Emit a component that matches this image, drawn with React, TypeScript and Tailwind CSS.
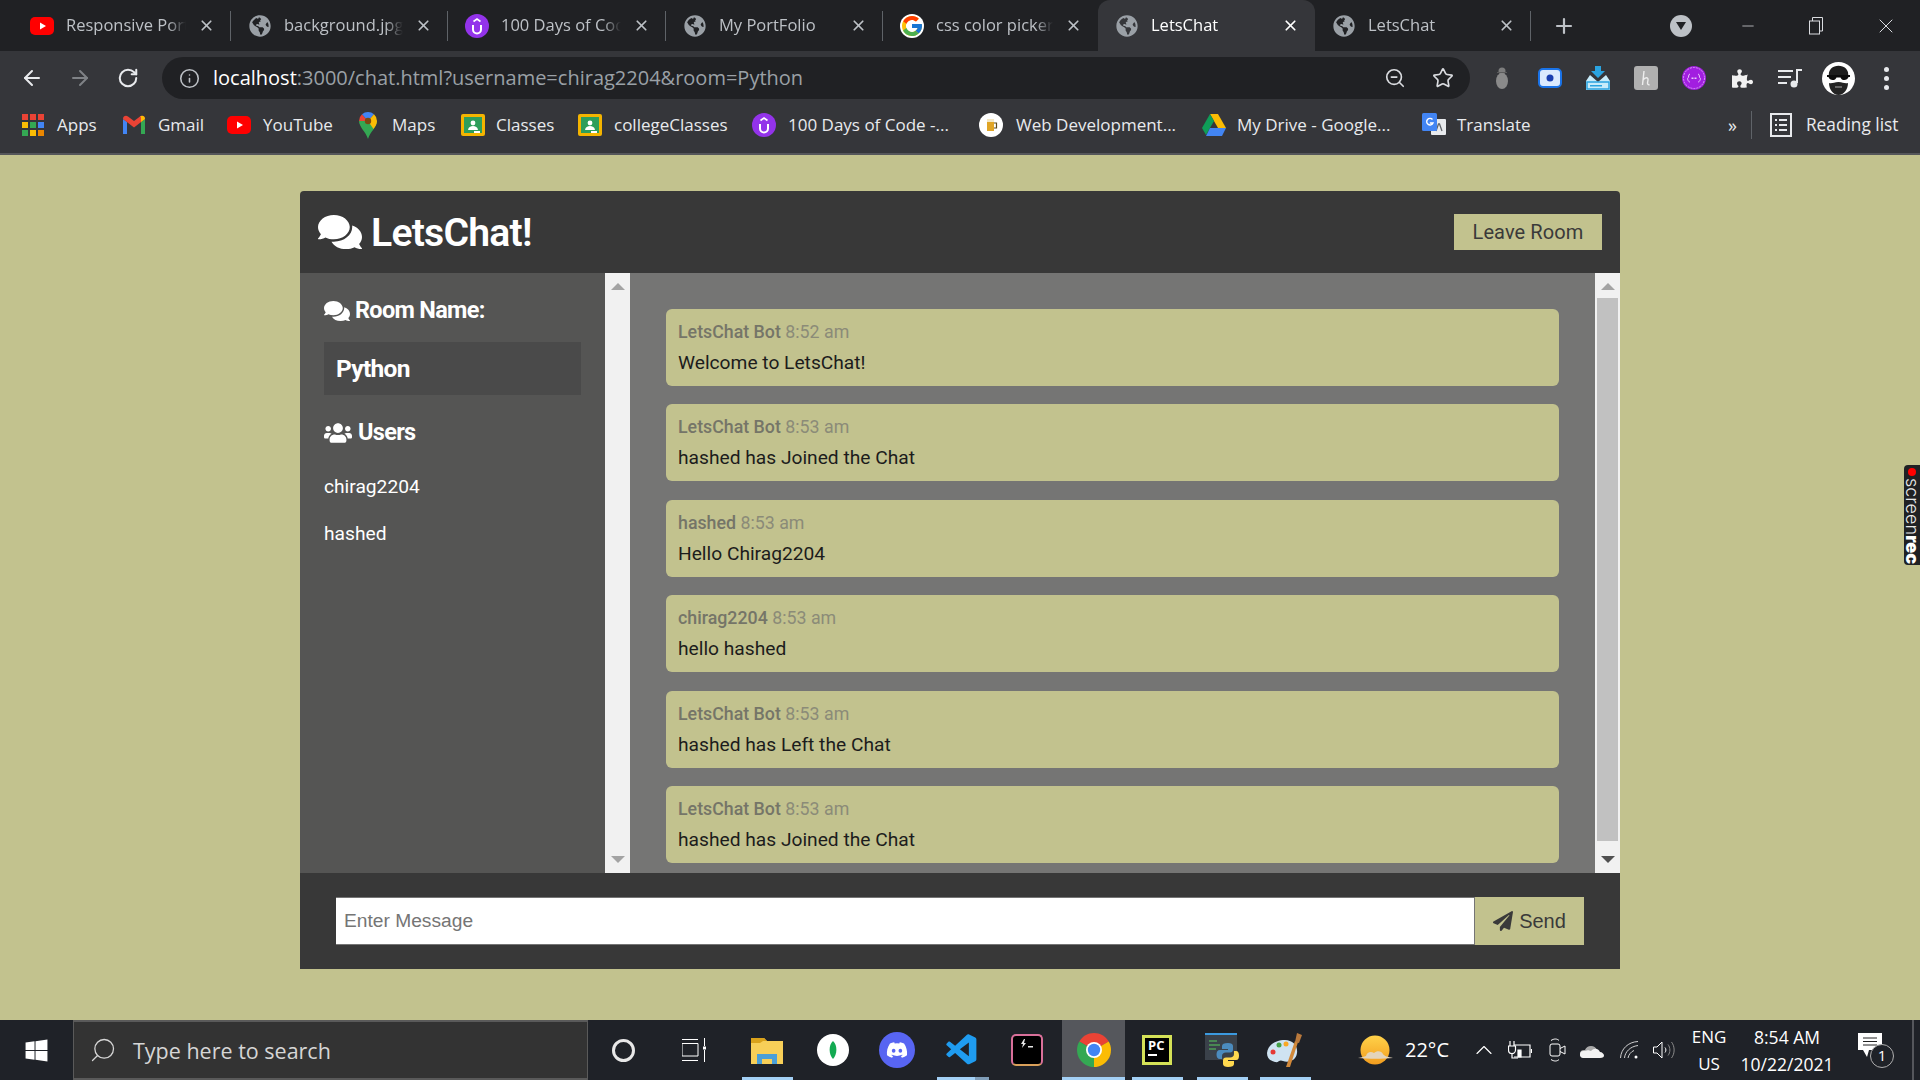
import { ArrowLeft, ArrowRight, ChevronUp, Info, Minus, Plus, RotateCw, Search, Star, X, ZoomOut } from "lucide-react";
import {
  FaComments,
  FaDiscord,
  FaGlobeAmericas,
  FaPaperPlane,
  FaPuzzlePiece,
  FaUsers,
  FaWindows,
} from "react-icons/fa";
import { FcGoogle } from "react-icons/fc";
import { VscVscode } from "react-icons/vsc";

const uiFont = "[font-family:'Open_Sans','Noto_Sans',sans-serif]";

function Globe() {
  return (
    <span className="flex w-[24px] shrink-0 justify-center">
      <FaGlobeAmericas size={22} className="text-[#9aa0a6]" />
    </span>
  );
}

function YouTubeIcon() {
  return (
    <svg width="24" height="24" viewBox="0 0 24 24" className="shrink-0">
      <rect x="0" y="3" width="24" height="18" rx="5" fill="#f00" />
      <path d="M10 8.500 16 12l-6 3.500z" fill="#fff" />
    </svg>
  );
}

function UdemyIcon() {
  return (
    <svg width="24" height="24" viewBox="0 0 24 24" className="shrink-0">
      <circle cx="12" cy="12" r="12" fill="#9333ea" />
      <path d="M8 11v4.500a4 4 0 0 0 8 0V11" fill="none" stroke="#fff" strokeWidth="2" />
      <path d="M8.500 7.500 12 5l3.500 2.500" fill="none" stroke="#fff" strokeWidth="1.600" />
    </svg>
  );
}

function ClassroomIcon() {
  return (
    <svg width="24" height="24" viewBox="0 0 24 24" className="shrink-0">
      <rect x="0" y="1" width="24" height="22" rx="2" fill="#f4b400" />
      <rect x="3" y="4" width="18" height="16" fill="#2e9e5b" />
      <circle cx="12" cy="10" r="2.400" fill="#fff" />
      <path d="M7 17c.5-3 2.500-4 5-4s4.500 1 5 4z" fill="#fff" />
      <rect x="13" y="18" width="6" height="2" fill="#fff" />
    </svg>
  );
}

function GmailIcon() {
  return (
    <svg width="24" height="20" viewBox="0 0 24 20" className="shrink-0">
      <path d="M1 19V4l4 3v12z" fill="#4285f4" />
      <path d="M19 19V7l4-3v15z" fill="#34a853" />
      <path d="M1 4c0-3 3-4 5-2.500L12 6l6-4.500c2-1.500 5-.5 5 2.500l-11 8.500z" fill="#ea4335" />
      <path d="M19 7l4-3c0-3-3-4-5-2.500L19 2z" fill="#fbbc04" />
    </svg>
  );
}

function MapsIcon() {
  return (
    <svg width="18" height="27" viewBox="0 0 18 27" className="shrink-0">
      <path d="M9 27C7 20 0 15 0 9h18c0 6-7 11-9 18z" fill="#34a853" />
      <path d="M0 9a9 9 0 0 1 3-6.700L9 9z" fill="#ea4335" />
      <path d="M3 2.300A9 9 0 0 1 15 2.300L9 9z" fill="#4285f4" />
      <path d="M15 2.300A9 9 0 0 1 18 9c0 3-2 6-3.500 8L9 9z" fill="#fbbc04" />
      <circle cx="9" cy="9" r="3.200" fill="#7a4a12" />
    </svg>
  );
}

function AppsIcon() {
  const colors = ["#ea4335", "#ea4335", "#ea4335", "#fbbc04", "#34a853", "#4285f4", "#34a853", "#fbbc04", "#ea8600"];
  return (
    <span className="grid w-[22px] shrink-0 grid-cols-3 gap-[2px]">
      {colors.map((c, i) => (
        <svg key={i} width="6" height="6">
          <rect width="6" height="6" fill={c} />
        </svg>
      ))}
    </span>
  );
}

function BeerIcon() {
  return (
    <svg width="24" height="24" viewBox="0 0 24 24" className="shrink-0">
      <circle cx="12" cy="12" r="12" fill="#fff" />
      <rect x="8" y="7" width="7" height="11" fill="#e0a526" />
      <rect x="8" y="6" width="7" height="3" fill="#f3e7c4" />
      <path d="M15 10h2.500v5H15" fill="none" stroke="#5b4a1c" strokeWidth="1.200" />
    </svg>
  );
}

function DriveIcon() {
  return (
    <svg width="24" height="22" viewBox="0 0 24 22" className="shrink-0">
      <path d="M8 0h8l8 14h-8z" fill="#fbbc04" />
      <path d="M8 0 0 14l4 7 8-14z" fill="#0f9d58" />
      <path d="M4 22l4-8h16l-4 8z" fill="#4285f4" />
    </svg>
  );
}

function TranslateIcon() {
  return (
    <svg width="24" height="24" viewBox="0 0 24 24" className="shrink-0">
      <rect x="9" y="6" width="15" height="16" rx="1" fill="#e8eaed" />
      <path d="M14 18l2.500-7h1l2.500 7" fill="none" stroke="#5f6368" strokeWidth="1.300" />
      <rect x="0" y="0" width="15" height="18" rx="1.500" fill="#4285f4" />
      <path d="M10.500 6.500A3.300 3.300 0 1 0 11 10H7.800" fill="none" stroke="#fff" strokeWidth="1.400" />
    </svg>
  );
}

const tabs = [
  { title: "Responsive Portfolio", icon: <YouTubeIcon />, cls: "w-[218px] ml-[13px]" },
  { title: "background.jpg", icon: <Globe />, cls: "w-[217px]" },
  { title: "100 Days of Code", icon: <UdemyIcon />, cls: "w-[218px]" },
  { title: "My PortFolio", icon: <Globe />, cls: "w-[217px]" },
  { title: "css color picker", icon: <FcGoogle size={24} className="shrink-0 rounded-full bg-white" />, cls: "w-[215px]" },
  { title: "LetsChat", icon: <Globe />, cls: "w-[217px]", active: true },
  { title: "LetsChat", icon: <Globe />, cls: "w-[216px]" },
];

function TabBar() {
  return (
    <div className={`flex h-[51px] items-stretch bg-[#202124] ${uiFont}`}>
      {tabs.map((t, i) => (
        <div
          key={i}
          className={`relative flex items-center gap-[12px] pl-[17px] pr-[16px] ${t.cls} ${
            t.active ? "rounded-t-[12px] bg-[#35363a] text-white" : "text-[#bdc1c6]"
          }`}
        >
          {t.icon}
          <span className="min-w-0 flex-1 overflow-hidden whitespace-nowrap text-[16.500px] [mask-image:linear-gradient(to_right,black_85%,transparent)]">
            {t.title}
          </span>
          <X size={17} strokeWidth={2.400} className="shrink-0" />
          {i !== 4 && i !== 5 && <span className="absolute right-0 top-[11px] h-[30px] w-px bg-[#5f6368]" />}
        </div>
      ))}
      <div className="ml-[13px] flex w-[40px] items-center justify-center text-[#bdc1c6]">
        <Plus size={24} strokeWidth={2.200} />
      </div>
      <div className="ml-[77px] flex w-[40px] items-center justify-center">
        <span className="flex h-[22px] w-[22px] items-center justify-center rounded-full bg-[#bdc1c6]">
          <svg width="10" height="8" viewBox="0 0 10 8">
            <path d="M0 0h10L5 8z" fill="#202124" />
          </svg>
        </span>
      </div>
      <div className="ml-[12px] flex items-center text-[#dadce0]">
        <span className="flex w-[69px] justify-center">
          <Minus size={18} strokeWidth={1} />
        </span>
        <span className="flex w-[69px] justify-center">
          <svg width="15" height="18" viewBox="0 0 15 18" fill="none" stroke="currentColor">
            <rect x="0.500" y="4" width="10" height="13" />
            <path d="M3.500 4V.5h10V14H11" />
          </svg>
        </span>
        <span className="flex w-[69px] justify-center">
          <X size={24} strokeWidth={1} />
        </span>
      </div>
    </div>
  );
}

function Toolbar() {
  return (
    <div className={`flex h-[54px] items-center bg-[#35363a] ${uiFont}`}>
      <div className="flex w-[162px] items-center text-[#e8eaed]">
        <span className="flex w-[64px] justify-center">
          <ArrowLeft size={24} strokeWidth={2} />
        </span>
        <span className="flex w-[32px] justify-center text-[#7f8286]">
          <ArrowRight size={24} strokeWidth={2} />
        </span>
        <span className="flex w-[64px] justify-center">
          <RotateCw size={22} strokeWidth={2.200} />
        </span>
      </div>
      <div className="flex h-[42px] w-[1308px] items-center rounded-full bg-[#202124] pl-[17px] pr-[16px]">
        <Info size={21} strokeWidth={1.800} className="text-[#bdc1c6]" />
        <span className="ml-[13px] flex-1 whitespace-nowrap text-[20px] text-[#9aa0a6]">
          <span className="text-white">localhost</span>:3000/chat.html?username=chirag2204&amp;room=Python
        </span>
        <ZoomOut size={22} strokeWidth={1.800} className="text-[#dadce0]" />
        <Star size={22} strokeWidth={1.800} className="ml-[26px] text-[#dadce0]" />
      </div>
      <div className="ml-[8px] flex items-center">
        <span className="flex w-[48px] justify-center">
          <svg width="14" height="22" viewBox="0 0 14 22">
            <circle cx="7" cy="4" r="3.500" fill="#7d7d7d" />
            <path d="M2 5h10v1H2z" fill="#5c5c5c" />
            <ellipse cx="7" cy="14" rx="6" ry="8" fill="#8a8a8a" />
          </svg>
        </span>
        <span className="flex w-[48px] justify-center">
          <svg width="24" height="20" viewBox="0 0 24 20">
            <rect x="1" y="1" width="22" height="18" rx="4" fill="#dbeafe" stroke="#1a73e8" strokeWidth="2" />
            <circle cx="12" cy="10" r="3.500" fill="#1a3fb0" />
          </svg>
        </span>
        <span className="flex w-[48px] justify-center">
          <svg width="24" height="24" viewBox="0 0 24 24">
            <path d="M9 0h6v5h4l-7 7-7-7h4z" fill="#2aa3e0" />
            <path d="M4 9l8 7 8-7 4 6v9H0v-9z" fill="#c8ecfa" />
            <path d="M1 16h22v7H1z" fill="none" stroke="#2aa3e0" strokeWidth="1.500" />
            <rect x="4" y="19" width="12" height="1.500" fill="#2aa3e0" />
          </svg>
        </span>
        <span className="flex w-[48px] justify-center">
          <svg width="24" height="24" viewBox="0 0 24 24">
            <rect width="24" height="24" rx="3" fill="#b0b0b0" />
            <path d="M10 5 8.500 19M9 14c2-3 5.500-3 5 0l-.5 3c0 1.500 1 2 2 1.500" fill="none" stroke="#eee" strokeWidth="1.400" />
          </svg>
        </span>
        <span className="flex w-[48px] justify-center">
          <svg width="24" height="24" viewBox="0 0 24 24">
            <circle cx="12" cy="12" r="12" fill="#a21ee0" />
            <circle cx="12" cy="12" r="10.500" fill="none" stroke="#d89af5" strokeWidth="1" strokeDasharray="2 1" />
            <path d="M8 8c-2 0-1 4-2 4s0 4 2 4M16 8c2 0 1 4 2 4s0 4-2 4" fill="none" stroke="#e9c6fb" />
            <rect x="9.500" y="11.500" width="2" height="1.500" fill="#e9c6fb" />
            <rect x="12.500" y="11.500" width="2" height="1.500" fill="#e9c6fb" />
          </svg>
        </span>
        <span className="flex w-[48px] justify-center text-[#f1f1f1]">
          <FaPuzzlePiece size={21} />
        </span>
        <span className="flex w-[48px] justify-center">
          <svg width="24" height="20" viewBox="0 0 24 20" fill="none" stroke="#e8eaed" strokeWidth="2">
            <path d="M0 3h15M0 9h13M0 15h9" />
            <path d="M19 1v14" />
            <circle cx="16" cy="16" r="2.500" fill="#e8eaed" />
            <path d="M19 2h5" />
          </svg>
        </span>
        <span className="flex w-[48px] justify-center">
          <svg width="33" height="33" viewBox="0 0 33 33">
            <circle cx="16.500" cy="16.500" r="16.500" fill="#fff" />
            <path d="M7 15C4 0 29 0 26 15z" fill="#1d1d1d" />
            <path d="M5 13h23v2h-1.500c-1 4-7 4-8 .5h-4c-1 3.500-7 3.500-8-.5H5z" fill="#0c0c0c" />
            <path d="M7 21c3 1 5-1 9.500-1s6 2 9.500 1c0 6-4 12-9.500 12S7 27 7 21z" fill="#242424" />
            <path d="M13 25h7" stroke="#aaa" strokeWidth="1" />
          </svg>
        </span>
        <span className="flex w-[48px] flex-col items-center gap-[4px]">
          <span className="h-[5px] w-[5px] rounded-full bg-[#e8eaed]" />
          <span className="h-[5px] w-[5px] rounded-full bg-[#e8eaed]" />
          <span className="h-[5px] w-[5px] rounded-full bg-[#e8eaed]" />
        </span>
      </div>
    </div>
  );
}

const bookmarks = [
  { label: "Apps", icon: <AppsIcon />, cls: "w-[100px] ml-[22px] gap-[13px]" },
  { label: "Gmail", icon: <GmailIcon />, cls: "w-[105px] gap-[12px]" },
  { label: "YouTube", icon: <YouTubeIcon />, cls: "w-[132px] gap-[12px]" },
  { label: "Maps", icon: <MapsIcon />, cls: "w-[102px] gap-[15px]" },
  { label: "Classes", icon: <ClassroomIcon />, cls: "w-[117px] gap-[11px]" },
  { label: "collegeClasses", icon: <ClassroomIcon />, cls: "w-[174px] gap-[12px]" },
  { label: "100 Days of Code -...", icon: <UdemyIcon />, cls: "w-[227px] gap-[12px]" },
  { label: "Web Development...", icon: <BeerIcon />, cls: "w-[223px] gap-[13px]" },
  { label: "My Drive - Google...", icon: <DriveIcon />, cls: "w-[220px] gap-[11px]" },
  { label: "Translate", icon: <TranslateIcon />, cls: "w-[306px] gap-[11px]" },
];

function BookmarkBar() {
  return (
    <div className={`flex h-[50px] items-center border-b-2 border-[#55565a] bg-[#35363a] pb-[8px] text-[17px] text-[#e8eaed] ${uiFont}`}>
      {bookmarks.map((b) => (
        <div key={b.label} className={`flex shrink-0 items-center whitespace-nowrap ${b.cls}`}>
          {b.icon}
          <span>{b.label}</span>
        </div>
      ))}
      <span className="text-[18px]">»</span>
      <span className="ml-[14px] h-[28px] w-px bg-[#5f6368]" />
      <svg width="22" height="24" viewBox="0 0 22 24" fill="none" stroke="#e8eaed" strokeWidth="2" className="ml-[18px]">
        <rect x="1" y="1" width="20" height="22" />
        <path d="M5 7h2M9 7h8M5 12h2M9 12h8M5 17h2M9 17h8" />
      </svg>
      <span className="ml-[14px] whitespace-nowrap text-[17.300px]">Reading list</span>
    </div>
  );
}

function ScrollTrack({ thumb = false }: { thumb?: boolean }) {
  return (
    <div className="flex w-[25px] shrink-0 flex-col items-center bg-[#f1f1f1]">
      <svg width="14" height="7" viewBox="0 0 14 7" className="mt-[10px] shrink-0">
        <path d="M7 0l7 7H0z" fill="#a3a3a3" />
      </svg>
      <div className="flex w-full flex-1 px-[2px] pt-[8px] pb-[15px]">
        {thumb && <div className="w-full bg-[#c1c1c1]" />}
      </div>
      <svg width="14" height="7" viewBox="0 0 14 7" className="mb-[10px] shrink-0">
        <path d="M0 0h14L7 7z" fill={thumb ? "#505050" : "#a3a3a3"} />
      </svg>
    </div>
  );
}

const messages = [
  { user: "LetsChat Bot", time: "8:52 am", text: "Welcome to LetsChat!" },
  { user: "LetsChat Bot", time: "8:53 am", text: "hashed has Joined the Chat" },
  { user: "hashed", time: "8:53 am", text: "Hello Chirag2204" },
  { user: "chirag2204", time: "8:53 am", text: "hello hashed" },
  { user: "LetsChat Bot", time: "8:53 am", text: "hashed has Left the Chat" },
  { user: "LetsChat Bot", time: "8:53 am", text: "hashed has Joined the Chat" },
];

function ChatCard() {
  return (
    <div className="flex w-[1320px] flex-col overflow-hidden rounded-t-[4px] font-['Roboto',sans-serif]">
      <header className="flex h-[82px] items-center justify-between bg-[#383838] pl-[18px] pr-[18px]">
        <h1 className="flex items-center gap-[9px] text-[39.200px] leading-none font-semibold tracking-[-0.8px] text-white">
          <FaComments size={44} />
          <span className="pt-[3px]">LetsChat!</span>
        </h1>
        <button className="flex h-[36px] w-[148px] items-center justify-center bg-[#c2c28e] text-[20px] tracking-[0.1px] text-[#3a3a3a]">
          Leave Room
        </button>
      </header>

      <main className="flex h-[600px]">
        <aside className="flex w-[305px] shrink-0 flex-col bg-[#555554] px-[24px] pt-[25px] text-white">
          <h2 className="flex h-[26px] items-center gap-[5px] text-[23.500px] font-bold tracking-[-0.7px]">
            <FaComments size={26} />
            Room Name:
          </h2>
          <div className="mt-[18px] flex h-[53px] items-center bg-[#4a4a4a] pl-[12px] pt-[1px] text-[24.500px] font-bold tracking-[-0.7px]">
            Python
          </div>
          <h2 className="mt-[25px] flex h-[26px] items-center gap-[6px] text-[23.500px] font-bold tracking-[-0.7px]">
            <FaUsers size={28} />
            Users
          </h2>
          <ul className="mt-[29px] flex flex-col gap-[24px] text-[19.200px] leading-[23px]">
            <li>chirag2204</li>
            <li>hashed</li>
          </ul>
        </aside>
        <ScrollTrack />
        <section className="flex flex-1 flex-col gap-[18.400px] bg-[#757574] pt-[36px] pl-[36px] pr-[36px]">
          {messages.map((m, i) => (
            <div key={i} className="flex h-[77px] shrink-0 flex-col rounded-[6px] bg-[#c2c28e] px-[12px] pt-[12px]">
              <p className="text-[17.800px] leading-[22px] text-[#8b8b78]">
                <span className="font-medium text-[#757568]">{m.user}</span> {m.time}
              </p>
              <p className="mt-[8px] text-[19.200px] leading-[23px] text-[#1c1c1c]">{m.text}</p>
            </div>
          ))}
        </section>
        <ScrollTrack thumb />
      </main>

      <footer className="flex h-[96px] items-center bg-[#383838] pl-[36px] pr-[36px]">
        <input
          placeholder="Enter Message"
          className="h-[48px] flex-1 border-y border-[#757575] bg-white px-[8px] font-['Liberation_Sans',sans-serif] text-[19.200px] placeholder:text-[#757575]"
        />
        <button className="flex h-[48px] w-[110px] items-center justify-center gap-[6px] border-l border-[#757575] bg-[#c2c28e] font-['Liberation_Sans',sans-serif] text-[20px] text-[#3a3a3a]">
          <FaPaperPlane size={20} />
          Send
        </button>
      </footer>
    </div>
  );
}

function Slot({ w, bar, active, children }: { w: string; bar?: boolean; active?: boolean; children: React.ReactNode }) {
  return (
    <div className={`relative flex h-full shrink-0 items-center justify-center ${w} ${active ? "bg-[#55575c]" : ""}`}>
      {children}
      {bar && <span className={`absolute bottom-0 h-[3px] bg-[#a3d0f5] ${active ? "w-full" : "w-[51px]"}`} />}
    </div>
  );
}

function Taskbar() {
  return (
    <div className={`flex h-[60px] items-stretch bg-[#1f2228] text-white ${uiFont}`}>
      <div className="flex w-[73px] items-center justify-center">
        <FaWindows size={25} />
      </div>
      <div className="flex w-[515px] items-center gap-[16px] border-y-2 border-x border-[#5a5a5a] bg-[#333] pl-[15px] text-[21.500px] text-[#d6d6d6]">
        <Search size={28} strokeWidth={1.100} className="-scale-x-100" />
        <span className="pt-[3px]">Type here to search</span>
      </div>
      <div className="ml-[3px] flex">
        <Slot w="w-[64px]">
          <span className="h-[23px] w-[23px] rounded-full border-[3px] border-[#e8e8e8]" />
        </Slot>
        <Slot w="w-[80px]">
          <svg width="26" height="24" viewBox="0 0 26 24" fill="none" stroke="#fff">
            <path d="M0 1.500h16M0 5.500h16V18H0zM0 22.500h16M22.500 0v8M22.500 12v12" />
            <path d="M21 10h3" strokeWidth="3" />
          </svg>
        </Slot>
        <Slot w="w-[64px]" bar>
          <svg width="32" height="27" viewBox="0 0 32 27">
            <path d="M0 1h13l3 3h16v23H0z" fill="#f7cf58" />
            <path d="M0 1h13l3 3h-4L9 6H0z" fill="#d9a21b" />
            <path d="M6 17h20v10H6z" fill="#4a9fd8" />
            <path d="M11 22h10v5H11z" fill="#f7cf58" />
          </svg>
        </Slot>
        <Slot w="w-[68px]">
          <svg width="32" height="32" viewBox="0 0 32 32">
            <circle cx="16" cy="16" r="16" fill="#fff" />
            <path d="M16 7c4.500 4 4.500 13 0 18-4.500-5-4.500-14 0-18z" fill="#13aa52" />
          </svg>
        </Slot>
        <Slot w="w-[60px]">
          <span className="flex h-[36px] w-[36px] items-center justify-center rounded-full bg-[#5865f2]">
            <FaDiscord size={22} />
          </span>
        </Slot>
        <Slot w="w-[70px]" bar>
          <VscVscode size={37} className="text-[#1f9cf0]" />
          <span className="absolute right-[8px] bottom-0 z-10 h-[3px] w-[14px] bg-[#7f9db8]" />
        </Slot>
        <Slot w="w-[60px]">
          <span className="flex h-[32px] w-[32px] items-start justify-center gap-[1px] rounded-[5px] border-2 border-[#d9709a] border-b-[#d9a05a] bg-black pt-[3px]">
            <svg width="14" height="10" viewBox="0 0 14 10" fill="#e8e8e8">
              <path d="M4 0 1 5h2L2 9l4-5H4l1-4zM8 7h5v1.500H8z" />
            </svg>
          </span>
        </Slot>
        <div className="ml-[5px] flex">
          <Slot w="w-[63px]" active bar>
            <svg width="34" height="34" viewBox="0 0 34 34">
              <path d="M17 17 2.300 8.500a17 17 0 0 1 29.400 0z" fill="#ea4335" />
              <path d="M17 17 31.700 8.500A17 17 0 0 1 17 34z" fill="#fbbc04" />
              <path d="M17 17v17A17 17 0 0 1 2.300 8.500z" fill="#34a853" />
              <circle cx="17" cy="17" r="8" fill="#fff" />
              <circle cx="17" cy="17" r="6.200" fill="#4285f4" />
            </svg>
          </Slot>
        </div>
        <Slot w="w-[64px]" bar>
          <span className="flex h-[30px] w-[30px] flex-col border-[3px] border-[#d4e157] bg-black pl-[3px] text-[13px] leading-[14px] font-bold">
            PC
            <span className="mt-[2px] h-[2px] w-[9px] bg-white" />
          </span>
        </Slot>
        <Slot w="w-[66px]" bar>
          <svg width="34" height="34" viewBox="0 0 34 34">
            <rect x="0" y="0" width="32" height="27" fill="#3a414a" />
            <rect x="0" y="0" width="32" height="2" fill="#3b9ae0" />
            <path d="M4 8h8M4 12h11M4 16h7" stroke="#4f9d57" strokeWidth="1.300" />
            <path d="M23 10c-4 0-6 1-6 3v3h6v1h-8c-2.500 0-3.500 2-3.500 4.500S12.500 26 15 26h2v-3c0-2 1.500-3.500 4-3.500h4c2 0 3-1 3-3V13c0-2-2-3-5-3z" fill="#4b8bbe" />
            <path d="M23 34c4 0 6-1 6-3v-3h-6v-1h8c2.500 0 3-2 3-4.500S33 18 31 18h-2v3c0 2-1.500 3.500-4 3.500h-4c-2 0-3 1-3 3V31c0 2 2 3 5 3z" fill="#ffd94f" />
          </svg>
        </Slot>
        <Slot w="w-[60px]" bar>
          <svg width="36" height="34" viewBox="0 0 36 34">
            <path d="M0 20C1 11 10 7 18 7c8 0 13 6 12 13-1 8-9 10-14 8-4-2-4 2-8 1-5-1-8-4-8-9z" fill="#cfe3f2" />
            <circle cx="6" cy="19" r="2.500" fill="#e53935" />
            <circle cx="12" cy="12" r="2.500" fill="#43a047" />
            <circle cx="19" cy="11" r="2.500" fill="#f9a825" />
            <path d="M19 34 28 8l3 1-8 25z" fill="#d2893a" />
            <path d="M28 9 30 0l5 2-3 8z" fill="#b9793c" />
          </svg>
        </Slot>
      </div>
      <div className="ml-[43px] flex items-center">
        <svg width="35" height="30" viewBox="0 0 35 30" className="shrink-0">
          <defs>
            <linearGradient id="sun" x1="0" y1="0" x2="0" y2="1">
              <stop offset="0" stopColor="#ffd24a" />
              <stop offset="1" stopColor="#f29d1f" />
            </linearGradient>
          </defs>
          <circle cx="17" cy="15" r="14.500" fill="url(#sun)" />
          <path d="M0 23c4-1 6-1 8-2 1-4 5-5 8-3 3-3 8-2 9 1 1 2 5 3 10 4-10 1-25 1-35 0z" fill="#e3d4ba" />
        </svg>
        <span className="ml-[12px] w-[50px] text-[20px]">22°C</span>
        <span className="ml-[11px] flex w-[36px] justify-center">
          <ChevronUp size={28} strokeWidth={1} />
        </span>
        <span className="flex w-[36px] justify-center">
          <svg width="24" height="18" viewBox="0 0 24 18" fill="none" stroke="#fff" strokeWidth="1.200">
            <path d="M6 4h16v12H6" />
            <path d="M23.500 8v4" />
            <path d="M10 9h3v7h-3z" fill="#fff" />
            <path d="M0.500 5h7v4a3.500 3.500 0 0 1-7 0zM2 5V0M6 5V0M4 12.500V17h6" />
          </svg>
        </span>
        <span className="flex w-[38px] justify-center">
          <svg width="17" height="24" viewBox="0 0 17 24" fill="none" stroke="#fff" strokeWidth="1">
            <rect x="1" y="6" width="10" height="12" rx="2" />
            <path d="M11 10.500l5-2.500v8l-5-2.500M2 2.500c3-2 6-2 8 0M2 21.500c3 2 6 2 8 0" />
          </svg>
        </span>
        <span className="flex w-[32px] justify-center">
          <svg width="24" height="16" viewBox="0 0 24 16">
            <path d="M4 16a4 4 0 0 1 0-8h1a6.500 6.500 0 0 1 12 0z" fill="#aaa" />
            <path d="M3 16a3.500 3.500 0 0 1 1-7c5-1 4-1 7 0 3-3 7-3 9 1 2 0 4 2 4 3.500S23 16 20 16z" fill="#f2f2f2" />
          </svg>
        </span>
        <span className="flex w-[42px] justify-center">
          <svg width="19" height="18" viewBox="0 0 19 18" fill="none" stroke="#cfcfcf" strokeWidth="1">
            <path d="M0.500 17C1 8 8 1 18 0.500" />
            <path d="M4.500 17C5 11 10 5.500 18 4.500" />
            <path d="M8 17c.5-3 3-6.500 6-7.500" />
            <circle cx="16" cy="16" r="1.500" fill="#fff" stroke="none" />
          </svg>
        </span>
        <span className="flex w-[28px] justify-center">
          <svg width="22" height="18" viewBox="0 0 22 18" fill="none" stroke="#fff" strokeWidth="1">
            <path d="M0.500 6h3.500L9 1v16L4 12H.5z" />
            <path d="M12 6.500c1.200 1.500 1.200 3.500 0 5" />
            <path d="M15 3.500c2.500 3 2.500 8 0 11M18.500 1c3.500 4.500 3.500 11.500 0 16" stroke="#8a8a8a" />
          </svg>
        </span>
        <div className="flex w-[62px] flex-col items-center gap-[7px] text-[17px] leading-[20px]">
          <span>ENG</span>
          <span>US</span>
        </div>
        <div className="flex w-[94px] flex-col items-center gap-[7px] text-[17.500px] leading-[20px]">
          <span>8:54 AM</span>
          <span>10/22/2021</span>
        </div>
        <div className="relative ml-[24px] h-[35px] w-[36px]">
          <svg width="24" height="24" viewBox="0 0 24 24" className="absolute left-0 top-0">
            <path d="M0 0h24v17H11l-2 7-4-7H0z" fill="#fff" />
            <path d="M5 5h14M5 8.500h14M5 12h14" stroke="#222" />
          </svg>
          <span className="absolute right-0 bottom-0 flex h-[24px] w-[24px] items-center justify-center rounded-full border border-[#b0b0b0] bg-[#1f2228] text-[15px] leading-none">
            1
          </span>
        </div>
        <span className="ml-[18px] h-full w-[2px] bg-[#55575c]" />
      </div>
    </div>
  );
}

export default function App() {
  return (
    <div className="relative flex h-screen flex-col overflow-hidden bg-[#c2c28e]">
      <TabBar />
      <Toolbar />
      <BookmarkBar />
      <div className="flex flex-1 justify-center pt-[36px]">
        <div className="h-fit">
          <ChatCard />
        </div>
      </div>
      <Taskbar />
      <div className="absolute top-[465px] right-0 flex h-[100px] w-[16px] flex-col items-center rounded-l-[4px] bg-[#202124] pt-[3px]">
        <span className="h-[8px] w-[8px] shrink-0 rounded-full bg-[#f00]" />
        <span className="mt-[2px] text-[18px] leading-[15px] font-light whitespace-nowrap text-[#e8e8e8] [writing-mode:vertical-lr] font-['Inter',sans-serif]">
          screen<b className="font-black text-white">rec</b>
        </span>
      </div>
    </div>
  );
}
